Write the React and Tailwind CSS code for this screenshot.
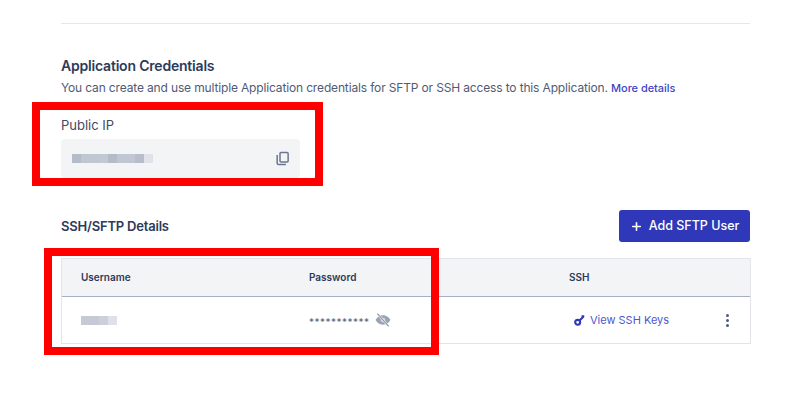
import { Plus } from "lucide-react";

const ipBlocks = [
  ["w-[9px]", "bg-[#b4bbc9]"],
  ["w-[18px]", "bg-[#c0c6d2]"],
  ["w-[9px]", "bg-[#c3c9d4]"],
  ["w-[9px]", "bg-[#b4bbc9]"],
  ["w-[18px]", "bg-[#c0c6d2]"],
  ["w-[9px]", "bg-[#b7bdca]"],
  ["w-[9px]", "bg-[#dfe2e8]"],
];

const userBlocks = [
  ["w-[18px]", "bg-[#c6cad6]"],
  ["w-[9px]", "bg-[#cdd0da]"],
  ["w-[9px]", "bg-[#dfe1e8]"],
];

function CopyIcon() {
  return (
    <svg viewBox="0 0 24 24" className="w-[15px] h-[15px]" fill="none" stroke="#6b7690" strokeWidth="2.4">
      <rect x="8" y="2.5" width="13" height="15" rx="1.5" />
      <path d="M3.5 6.5v13a2 2 0 0 0 2 2h12" />
    </svg>
  );
}

function EyeOffIcon() {
  return (
    <svg viewBox="0 0 24 24" className="w-[16px] h-[16px]">
      <path d="M12 5C6.5 5 2.6 8.6 1 12c1.6 3.4 5.5 7 11 7s9.4-3.6 11-7c-1.6-3.4-5.5-7-11-7z" fill="#9aa3b5" />
      <circle cx="12" cy="12" r="3.5" fill="#d5d9e1" />
      <path d="M4 3l16 18" stroke="#ffffff" strokeWidth="3" />
      <path d="M3.5 2.5l17 19" stroke="#8e97aa" strokeWidth="2" />
    </svg>
  );
}

function KeyIcon() {
  return (
    <svg viewBox="0 0 12 12" className="w-[11px] h-[11px]" fill="none" stroke="#2f38b8" strokeWidth="2.3">
      <circle cx="4" cy="8" r="2.7" />
      <path d="M6 6l4.2-4.2M8.2 1.3h3" />
    </svg>
  );
}

export default function App() {
  return (
    <div className="w-[793px] h-[408px] overflow-hidden relative bg-white pt-[23px] pl-[61px] pr-[43px] font-['Inter',sans-serif]">
      <div className="border-t border-[#e5e7eb]" />

      <h2 className="mt-[32px] text-[14px] leading-[20px] tracking-[-0.2px] font-semibold text-[#2d3a5a]">Application Credentials</h2>
      <p className="mt-[3px] text-[12px] leading-[18px] tracking-[-0.15px] text-[#4f5b76]">
        You can create and use multiple Application credentials for SFTP or SSH access to this Application.{" "}
        <span className="text-[11px] tracking-[-0.05px] font-medium text-[#3d46c4]">More details</span>
      </p>

      <div className="mt-[18px] w-[239px]">
        <label className="block text-[13px] leading-[20px] text-[#3f4a63]">Public IP</label>
        <div className="mt-[4px] h-[39px] rounded-[4px] bg-[#f3f4f6] flex items-center justify-between pl-[11px] pr-[10px]">
          <div className="flex h-[9px]">
            {ipBlocks.map(([w, c], i) => (
              <div key={i} className={`${w} ${c}`} />
            ))}
          </div>
          <CopyIcon />
        </div>
      </div>

      <div className="mt-[32px] flex items-center justify-between h-[32px]">
        <h2 className="text-[13px] leading-[20px] tracking-[-0.2px] font-semibold text-[#2d3a5a]">SSH/SFTP Details</h2>
        <button className="h-[32px] w-[131px] rounded-[3px] bg-[#2f38b8] text-white flex items-center justify-center gap-[6px] text-[12.5px] font-medium">
          <Plus size={13} strokeWidth={3} />
          Add SFTP User
        </button>
      </div>

      <div className="mt-[16px] -mr-px border border-[#e2e4ea]">
        <div className="h-[38px] bg-[#f3f4f6] border-b border-[#a9afc2] flex items-center text-[10px] font-semibold text-[#2d3a5a]">
          <div className="w-[247px] pl-[19px]">Username</div>
          <div className="w-[260px]">Password</div>
          <div>SSH</div>
        </div>
        <div className="h-[46px] flex items-center">
          <div className="w-[247px] pl-[19px]">
            <div className="flex h-[9px]">
              {userBlocks.map(([w, c], i) => (
                <div key={i} className={`${w} ${c}`} />
              ))}
            </div>
          </div>
          <div className="w-[260px] flex items-center gap-[5px]">
            <span className="text-[10px] leading-[10px] tracking-[0.5px] text-[#56617c] pt-[3px]">***********</span>
            <EyeOffIcon />
          </div>
          <div className="flex-1 flex items-center justify-between pl-[5px] pr-[21px]">
            <div className="flex items-center gap-[5px] text-[11px] text-[#5058cc]">
              <KeyIcon />
              View SSH Keys
            </div>
            <div className="flex flex-col gap-[2px]">
              <span className="w-[3px] h-[3px] rounded-full bg-[#4f5b76]" />
              <span className="w-[3px] h-[3px] rounded-full bg-[#4f5b76]" />
              <span className="w-[3px] h-[3px] rounded-full bg-[#4f5b76]" />
            </div>
          </div>
        </div>
      </div>

      <div className="absolute left-[32px] top-[102px] w-[291px] h-[84px] border-[8px] border-[#ff0000]" />
      <div className="absolute left-[44px] top-[248px] w-[395px] h-[107px] border-[8px] border-[#ff0000]" />
    </div>
  );
}
